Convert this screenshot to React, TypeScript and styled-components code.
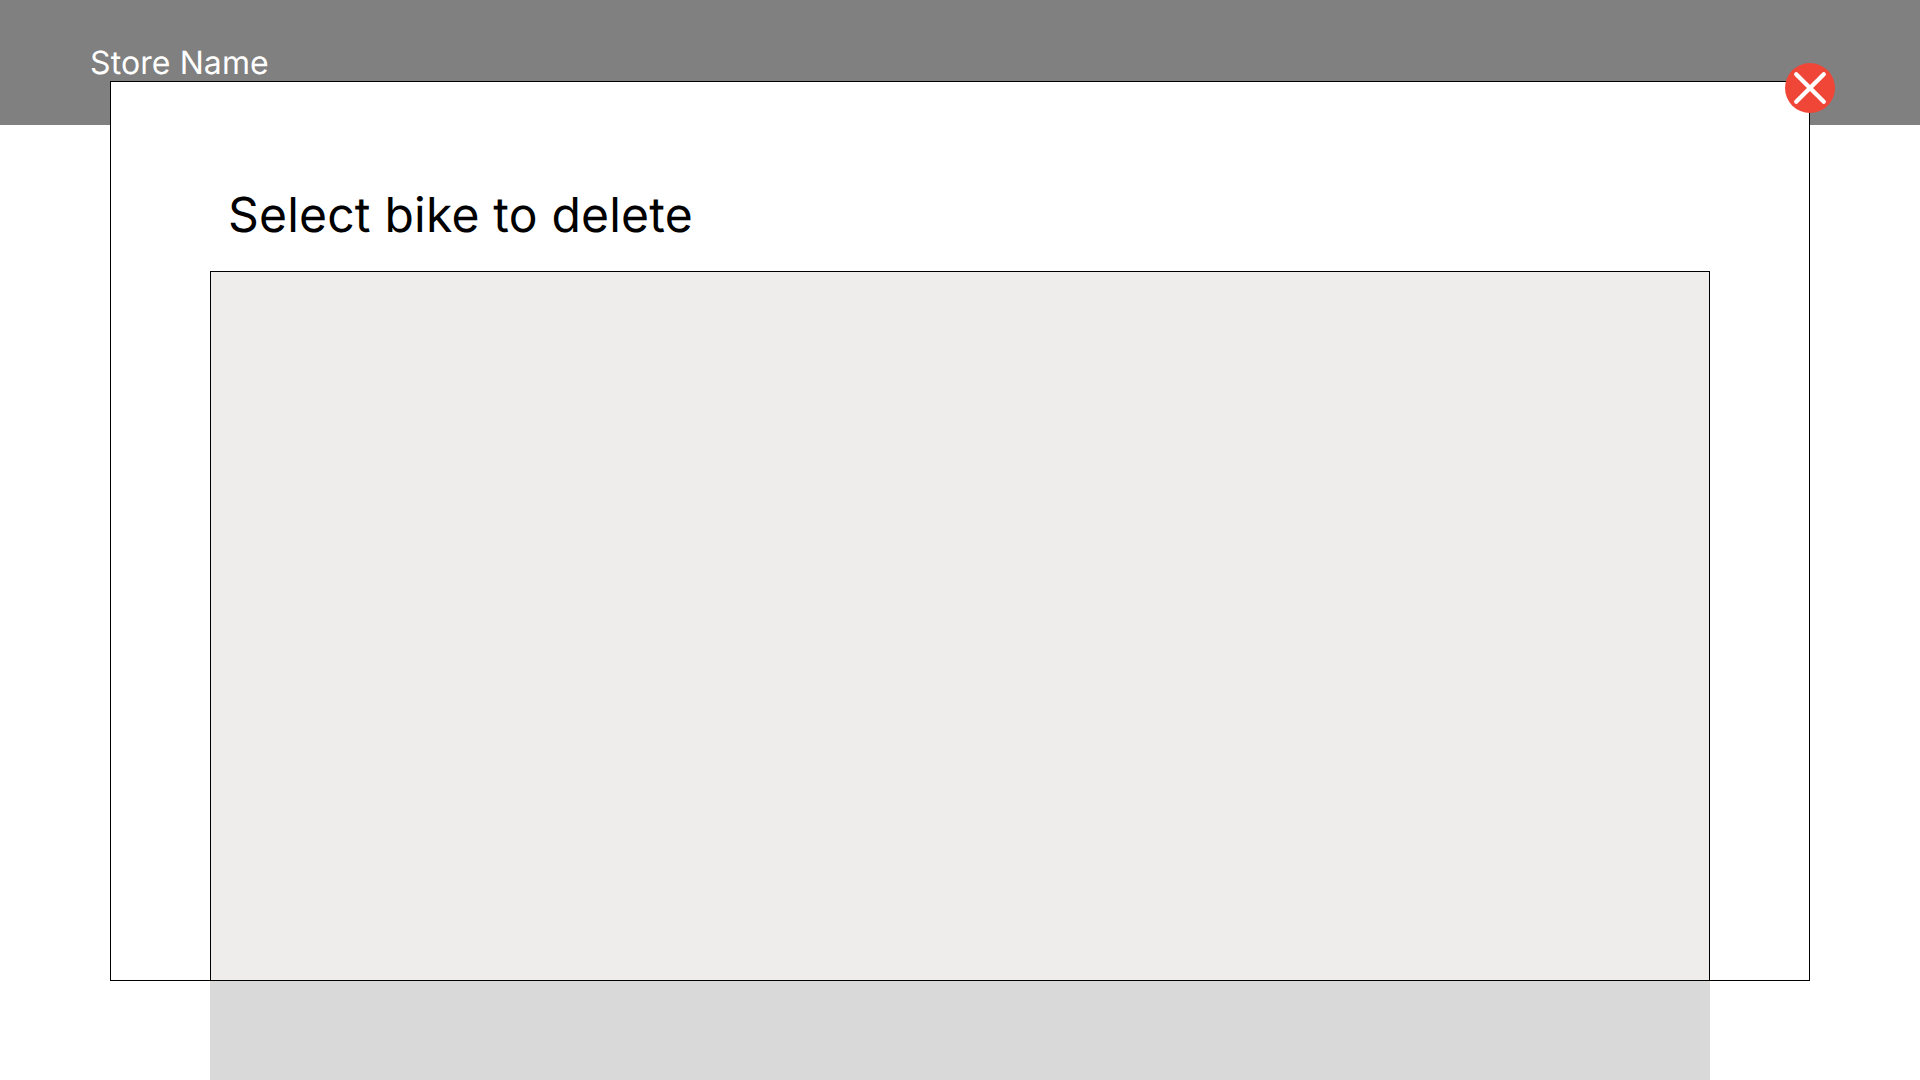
import React from "react";
import styled, { createGlobalStyle } from "styled-components";

const Global = createGlobalStyle`
  *{box-sizing:border-box}
  body{margin:0;background:#fff;font-family:Inter,sans-serif;overflow:hidden;text-rendering:geometricPrecision}
`;
const Page = styled.div`position:relative;width:1920px;height:1080px;overflow:hidden;display:flex;flex-direction:column;`;
const Header = styled.header`height:125px;flex:none;background:#808080;padding:43px 0 0 90px;`;
const StoreName = styled.div`color:#fff;font-size:32px;line-height:39px;letter-spacing:0.1px;white-space:nowrap;`;
const Main = styled.main`flex:1;display:flex;padding:0 210px;`;
const Backdrop = styled.div`flex:1;background:#d9d9d9;`;
const Dialog = styled.section`position:absolute;left:110px;top:81px;width:1700px;height:900px;background:#fff;border:1px solid #000;padding:104px 99px 0;display:flex;flex-direction:column;`;
const Title = styled.h1`margin:0;padding-left:18px;height:85px;font-weight:400;font-size:48px;line-height:58px;letter-spacing:0.21px;color:#000;white-space:nowrap;`;
const List = styled.div`flex:1;background:#eeedeb;border:1px solid #000;border-bottom:0;`;
const Close = styled.button`position:absolute;right:-26px;top:-19px;width:50px;height:50px;padding:0;border:0;background:none;svg{display:block}`;

export default function App() {
  return (
    <>
      <Global />
      <Page>
        <Header><StoreName>Store Name</StoreName></Header>
        <Main><Backdrop /></Main>
        <Dialog role="dialog">
          <Title>Select bike to delete</Title>
          <List />
          <Close aria-label="Close">
            <svg width="50" height="50" viewBox="0 0 50 50">
              <circle cx="25" cy="25" r="25" fill="#ef4638" />
              <path d="M11.2 11.2L38.8 38.8M38.8 11.2L11.2 38.8" stroke="#fff" strokeWidth="4.3" strokeLinecap="round" />
            </svg>
          </Close>
        </Dialog>
      </Page>
    </>
  );
}
